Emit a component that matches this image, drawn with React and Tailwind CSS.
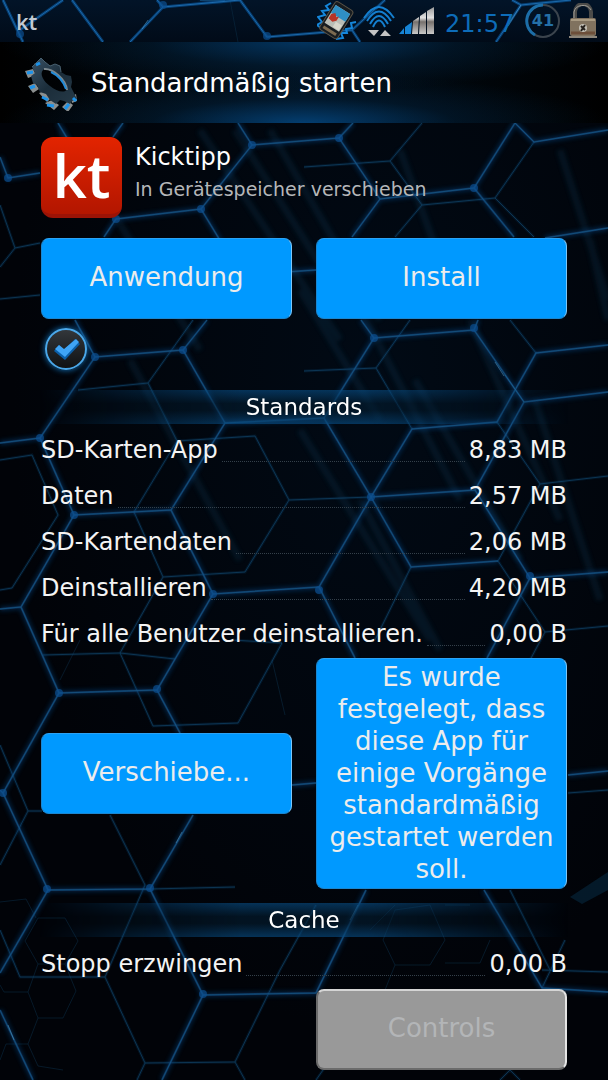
import React from 'react';

const storage = [
  { label: 'SD-Karten-App', value: '8,83 MB' },
  { label: 'Daten', value: '2,57 MB' },
  { label: 'SD-Kartendaten', value: '2,06 MB' },
  { label: 'Deinstallieren', value: '4,20 MB' },
  { label: 'Für alle Benutzer deinstallieren.', value: '0,00 B' }
];

const cache = [{ label: 'Stopp erzwingen', value: '0,00 B' }];

// Wallpaper, from back to front: soft light beams, dim cells, bright cells
const beams =
  'M60 130L200 350M200 130L340 340M235 130L330 280M270 130L380 320M330 250L460 500M300 290L380 420M300 430L430 640M400 150L440 260M415 380L520 560M470 320L560 520M535 400L600 600M590 240L608 320M130 360L240 560M360 500L440 650M560 150L608 300';

const dimCells =
  'M0 267L15 248L40 243M15 248L0 205M0 299L40 295M304 167L390 161L422 123M390 161L422 205L395 237M422 205L495 198L534 142M495 198L534 237M78 390L148 383L193 320M148 383L177 441L134 512L163 577L245 572L289 500L255 436L177 441M289 500L371 497M0 460L32 455L58 515L12 588L0 590M304 371L376 368L410 320M376 368L412 429M497 422L540 484L608 476M540 484L498 561L545 632L608 626M545 632L530 660M411 567L375 640M43 655L120 653L153 726L238 723L282 643M120 653L175 659M0 745L28 811L42 811M28 811L0 865M110 815L145 885L105 977L145 1063L235 1062L280 970L316 905M105 977L20 977L0 930M145 1063L137 1080M235 1062L245 1080M150 889L235 887M163 577L120 653M510 890L550 970M542 988L565 940M542 970L608 972M352 123L380 90M232 640L282 643M568 793L608 790M316 1080L330 1060M500 1080L510 1070L520 1080M510 320L536 353';

const tinyCells =
  'M38 918L65 918L78 941L65 964L38 964L25 941ZM38 964L28 992L4 992L0 985M28 992L38 1018L63 1018L76 991L65 964M38 1018L28 1044L6 1044L0 1060M28 1044L38 1066L63 1070M0 902L26 899L36 918M430 905L445 940L430 965L395 965L383 940L395 910ZM445 963L480 963L490 940M395 965L385 990M370 930L395 905M60 680L80 640M445 905L470 905M272 660L285 715M230 0L238 42';

const brightCells =
  'M0 157L8 178L40 173M58 123L70 143M113 137L123 123M238 123L252 145L339 138L353 123M339 138L380 199L474 188L515 123L534 142L608 130M252 145L201 209L116 219L104 237M201 209L218 237L238 275L316 270M380 199L352 237M474 188L514 237M545 238L608 228M75 320L95 357L183 350L207 320M183 350L225 423L324 418L374 338L474 330L478 320M361 320L374 338M95 357L40 438L0 443M40 438L74 515L171 510L225 423M171 510L213 594L319 587L371 497L324 418M371 497L412 429L497 422L536 353L608 345M371 497L475 490L524 402L474 330M524 402L608 392M524 402L505 375M371 497L411 567L498 561M475 490L530 578L608 572M530 578L487 658M213 594L157 690L59 693L21 607L74 515M21 607L0 609M319 587L355 658M157 690L180 733M59 693L3 793L48 890L150 889L193 815M150 889L203 995L316 993L366 890M203 995L162 1080M48 890L0 973M0 1010L33 1080M484 890L542 988L608 992M292 785L316 783M568 775L608 771M0 790L3 793M200 0L225 0';

const topCells =
  'M3 0L23 42M63 0L20 30M72 0L103 42M157 0L163 7L130 42M163 7L240 0L267 37L352 30L360 42M512 0L521 5L496 42M521 5L571 0M352 30L385 0';

const nodes = [
  [8, 178], [252, 145], [339, 138], [201, 209], [116, 219], [474, 188], [95, 357], [183, 350],
  [374, 338], [474, 328], [40, 438], [74, 515], [371, 497], [213, 594], [319, 590], [157, 689],
  [3, 793], [47, 889], [150, 888], [203, 994], [530, 576], [59, 693], [267, 36], [20, 34], [163, 5]
];

const Wallpaper = () => (
  <svg
    className="absolute inset-0 h-full w-full"
    viewBox="0 0 608 1080"
    preserveAspectRatio="xMidYMin slice"
    fill="none"
    aria-hidden="true"
  >
    <defs>
      <radialGradient id="haze" cx="0.62" cy="0.36" r="0.6">
        <stop offset="0" stopColor="#010a15" />
        <stop offset="1" stopColor="#010308" />
      </radialGradient>
      <linearGradient id="sky" x1="0" x2="0" y1="0" y2="1">
        <stop offset="0" stopColor="#021428" />
        <stop offset="1" stopColor="#010b18" />
      </linearGradient>
      <filter id="glow" x="-5%" y="-5%" width="110%" height="110%">
        <feGaussianBlur stdDeviation="2" />
      </filter>
    </defs>
    <rect width="608" height="1080" fill="url(#haze)" />
    <rect width="608" height="42" fill="url(#sky)" />
    <path d={beams} stroke="#0a3550" strokeWidth="7" opacity="0.3" filter="url(#glow)" />
    <path d={tinyCells} stroke="#0b2f4a" opacity="0.5" />
    <path d={dimCells} stroke="#0c3d63" strokeWidth="3" opacity="0.25" />
    <path d={dimCells} stroke="#124c75" opacity="0.6" />
    <path d={brightCells} stroke="#07498a" strokeWidth="5" opacity="0.4" filter="url(#glow)" />
    <path d={brightCells} stroke="#0d4474" strokeWidth="2" opacity="0.7" />
    <path d={brightCells} stroke="#2a76aa" opacity="0.35" />
    <path d={topCells} stroke="#0a5ba5" strokeWidth="3" opacity="0.6" />
    <path d={topCells} stroke="#2b86cf" opacity="0.6" />
    <path
      d="M508 26L521 5M142 29L148 20M8 1025L14 1040M176 843L182 832M495 362L504 376M350 920L358 905"
      stroke="#6db7de"
      opacity="0.4"
    />
    <path d="M570 897L608 872V890L582 904Z" fill="#062337" opacity="0.7" />
    {nodes.map(([x, y]) => (
      <circle key={`${x}-${y}`} cx={x} cy={y} r="4" fill="#0b4f90" opacity="0.7" />
    ))}
  </svg>
);

const VibratePhone = () => (
  <svg className="h-10 w-10" viewBox="0 0 40 40" fill="none" aria-hidden="true">
    <path d="M14 2L9 5L12 9L5 10L8 14L1 16L5 21L0 24L4 27" stroke="#1587dc" strokeWidth="2" />
    <path d="M39 21L34 22L35 27L29 28L30 32L24 32L26 37L19 38" stroke="#1587dc" strokeWidth="2" />
    <g transform="rotate(32 20 19)">
      <rect x="9" y="3" width="21" height="33" rx="3" fill="#171c20" stroke="#5a5346" />
      <rect x="11" y="7" width="17" height="21" fill="#b9bdb6" />
      <rect x="11" y="7" width="17" height="9" fill="#2f8fc4" />
      <path d="M12 17l3-3 3 3 2-2v5l-3 3-5-1z" fill="#b93427" />
      <path d="M20 21h7v6h-7z" fill="#d7d6cb" />
      <path d="M12 32h15" stroke="#7b6a50" strokeWidth="3" />
    </g>
  </svg>
);

const Wifi = () => (
  <svg className="h-8 w-8" viewBox="0 0 32 32" fill="none" aria-hidden="true">
    <g stroke="#147fd0" strokeWidth="2">
      <path d="M1 13Q16 -9 31 13" />
      <path d="M4 16Q16 -3 28 16" />
      <path d="M7 19Q16 3 25 19" />
      <path d="M10 22Q16 9 22 22" />
    </g>
    <path d="M5 25h11l-5 6zM17 31h11l-6-6z" fill="#c4c4c4" />
  </svg>
);

const Signal = () => (
  <svg className="h-8 w-9" viewBox="0 0 36 32" aria-hidden="true">
    <defs>
      <linearGradient id="chrome" x1="0" x2="0" y1="0" y2="1">
        <stop offset="0" stopColor="#9a9a9a" />
        <stop offset="0.4" stopColor="#e0e0e0" />
        <stop offset="0.55" stopColor="#77716d" />
        <stop offset="1" stopColor="#c9c9c9" />
      </linearGradient>
    </defs>
    <path d="M0 29L5 23V29ZM6 22L13 17L12 29H6Z" fill="#1684d6" />
    <path d="M14 16L20 12L19 29H13ZM21 11L27 7V29H20ZM28 6L35 2V29H28Z" fill="url(#chrome)" />
  </svg>
);

const BatteryRing = () => (
  <div className="relative flex size-9 items-center justify-center">
    <svg className="absolute inset-0 size-9" viewBox="0 0 36 36" fill="none" aria-hidden="true">
      <circle cx="18" cy="18" r="16" stroke="#3b444d" strokeWidth="2" />
      <path d="M18 2A16 16 0 0 0 10 32" stroke="#1c6ea8" strokeWidth="3" />
    </svg>
    <span className="text-base font-bold text-[#2470a8]">41</span>
  </div>
);

const Padlock = () => (
  <svg className="h-9 w-7" viewBox="0 0 28 36" fill="none" aria-hidden="true">
    <path d="M6 18V9a8 8 0 0 1 16 0v9" stroke="#4b4b49" strokeWidth="4" />
    <path d="M5 18V9a9 8 0 0 1 17 -2" stroke="#a09e98" />
    <rect x="1" y="15" width="26" height="18" rx="2" fill="#80725f" />
    <path d="M2 17h24" stroke="#a89a82" strokeWidth="2" />
    <path d="M2 30h24" stroke="#6d4f3a" strokeWidth="3" />
    <path d="M0 34h28" stroke="#8d867b" strokeWidth="2" />
    <circle cx="14" cy="25" r="4" fill="#c4c0b6" />
    <path d="M12 28l4-6M12 23l4 4" stroke="#25211d" strokeWidth="2" />
  </svg>
);

const Gear = () => (
  <svg className="h-14 w-14" viewBox="0 0 56 56" fill="none" aria-hidden="true">
    <defs>
      <linearGradient id="steel" x1="0" x2="1" y1="0" y2="1">
        <stop offset="0" stopColor="#3a5265" />
        <stop offset="0.5" stopColor="#1b2d3a" />
        <stop offset="1" stopColor="#263a48" />
      </linearGradient>
    </defs>
    {/* teeth seen from the side */}
    <g fill="#8b8f8f">
      <path d="M10 9l7 -3 4 5 -7 4zM1 16l8 -2 3 6 -8 3zM4 31l7 -3 4 6 -6 4zM15 38l8 -3 6 6 -6 6zM21 48l7 -3 7 5 -5 5zM38 52l6 -6 5 4 -5 7zM47 42l5 -3 1 7 -5 2z" />
    </g>
    <path
      fillRule="evenodd"
      fill="url(#steel)"
      d="M8 12L12 8L17 3L21 7L26 11L31 9L36 11L37 17L42 20L47 21L48 27L47 32L50 38L53 44L48 46L46 49L40 46L36 45L32 49L26 45L22 39L16 37L13 30L9 28L7 21L11 18ZM19 15C15 19 20 27 26 31C32 36 41 39 43 34C44 29 38 21 31 17C26 14 21 13 19 15Z"
    />
    <path
      d="M12 10l4 -2M3 18l6 -1M6 33l5 -2M18 42l6 3M23 50l7 1M41 54l4 -5M49 43l3 3"
      stroke="#1c93ea"
      strokeWidth="3"
    />
    <path d="M20 14C28 13 42 24 43 35" stroke="#7c888e" strokeWidth="2" />
    <path d="M27 17C34 20 40 27 42 34" stroke="#238cd8" strokeWidth="2" />
    <path d="M8 12L12 8L17 3L21 7L26 11L31 9L36 11L37 17" stroke="#48606f" />
  </svg>
);

const StatusBar = () => (
  <div className="flex h-[42px] items-center justify-between pr-[11px] pl-4">
    <span className="font-['Open_Sans',sans-serif] text-[22px] font-semibold text-[#c3cad2]">kt</span>
    <div className="flex items-center">
      <VibratePhone />
      <div className="ml-1.5">
        <Wifi />
      </div>
      <div className="ml-1">
        <Signal />
      </div>
      <time className="ml-2.5 w-[70px] pt-1.5 text-2xl leading-8 text-[#0d6cb8]">21:57</time>
      <div className="ml-2.5">
        <BatteryRing />
      </div>
      <div className="ml-2">
        <Padlock />
      </div>
    </div>
  </div>
);

const ActionButton = ({ children, className = '', disabled = false }) => (
  <button
    type="button"
    disabled={disabled}
    className={`w-full rounded-lg border px-2 text-[26px] leading-8 ${
      disabled
        ? 'border-2 border-[#6b6b6b] border-t-[#d5d5d5] border-r-[#e5e5e5] bg-[#999999] text-[#b3b5b7]'
        : 'border-[#1a86d0] border-t-[#2ba3f5] border-r-[#7cc6f8] bg-[#0099ff] text-[#ececec]'
    } ${className}`}
  >
    {children}
  </button>
);

const SectionTitle = ({ children }) => (
  <h2 className="mx-10 flex h-[34px] items-center justify-center bg-[linear-gradient(180deg,rgba(8,76,130,0.65),rgba(4,30,50,0.6)_40%,rgba(4,30,50,0.6)_60%,rgba(8,76,130,0.65))] text-[23px] leading-8 text-white [mask-image:linear-gradient(90deg,transparent,black_38%,black_62%,transparent)]">
    {children}
  </h2>
);

const SizeList = ({ rows }) => (
  <dl className="px-[41px]">
    {rows.map(({ label, value }) => (
      <div key={label} className="flex h-[46px] items-center gap-1 text-2xl leading-7 text-[#f4f4f4]">
        <dt className="whitespace-nowrap">{label}</dt>
        <div className="h-6 flex-1 border-b border-dotted border-[#34404a]" aria-hidden="true" />
        <dd className="whitespace-nowrap">{value}</dd>
      </div>
    ))}
  </dl>
);

const App = () => {
  return (
    <div className="relative min-h-screen overflow-hidden bg-[#010409] font-['DejaVu_Sans',sans-serif]">
      <Wallpaper />

      <div className="relative">
        <StatusBar />

        <header className="flex h-[81px] items-center gap-[11px] bg-black bg-[radial-gradient(ellipse_50%_60%_at_50%_100%,rgba(4,74,134,0.8),rgba(4,50,90,0.3)_50%,transparent),radial-gradient(ellipse_50%_60%_at_50%_0%,rgba(4,62,112,0.8),rgba(4,50,90,0.3)_50%,transparent),linear-gradient(90deg,#000,#010d18_50%,#000)] pl-6">
          <Gear />
          <h1 className="text-[26px] leading-8 text-white">Standardmäßig starten</h1>
        </header>

        <main>
          {/* App info */}
          <section className="flex gap-[13px] px-[41px] pt-3.5">
            <div className="flex size-[81px] items-center justify-center rounded-xl border-b-4 border-[#9b1306] bg-linear-to-b from-[#e32400] to-[#b31600] pb-0.5 font-['Open_Sans',sans-serif] text-6xl leading-none font-semibold text-white">
              kt
            </div>
            <div className="pt-1.5">
              <p className="text-2xl leading-7 text-white">Kicktipp</p>
              <p className="pt-1 text-[19px] leading-7 text-[#b5b7b9]">In Gerätespeicher verschieben</p>
            </div>
          </section>

          <div className="grid grid-cols-2 gap-6 px-[41px] pt-5">
            <ActionButton className="h-[81px] pb-1">Anwendung</ActionButton>
            <ActionButton className="h-[81px] pb-1">Install</ActionButton>
          </div>

          <div className="px-[45px] pt-[9px] pb-5">
            <label className="relative block size-[42px]">
              <input
                type="checkbox"
                defaultChecked
                aria-label="Standard"
                className="peer block size-[42px] appearance-none rounded-full border-2 border-[#4aa8ea] bg-linear-to-b from-[#33373b] to-[#101214] shadow-[0_0_6px_#1277c4]"
              />
              <svg
                className="pointer-events-none absolute inset-0 hidden peer-checked:block"
                viewBox="0 0 42 42"
                aria-hidden="true"
              >
                <path d="M9 23L14 17L19 22L30 11L35 16L20 32Z" fill="#0b5fa8" />
                <path d="M10 21L14 17L19 21L31 11L34 14L20 29Z" fill="#3fa4f5" />
              </svg>
            </label>
          </div>

          <SectionTitle>Standards</SectionTitle>
          <div className="pt-[3px]">
            <SizeList rows={storage} />
          </div>

          <div className="grid grid-cols-2 items-center gap-6 px-[41px] pt-px">
            <ActionButton className="h-[81px] pb-1">Verschiebe...</ActionButton>
            <ActionButton className="pt-0.5 pb-[3px]">
              Es wurde festgelegt, dass diese App für einige Vorgänge standardmäßig gestartet werden soll.
            </ActionButton>
          </div>

          <div className="pt-3.5">
            <SectionTitle>Cache</SectionTitle>
            <div className="pt-1">
              <SizeList rows={cache} />
            </div>
          </div>

          <div className="grid grid-cols-2 gap-6 px-[41px] pt-0.5 pb-2.5">
            <ActionButton className="col-start-2 h-[81px] pb-1" disabled>
              Controls
            </ActionButton>
          </div>
        </main>
      </div>
    </div>
  );
};

export default App;
